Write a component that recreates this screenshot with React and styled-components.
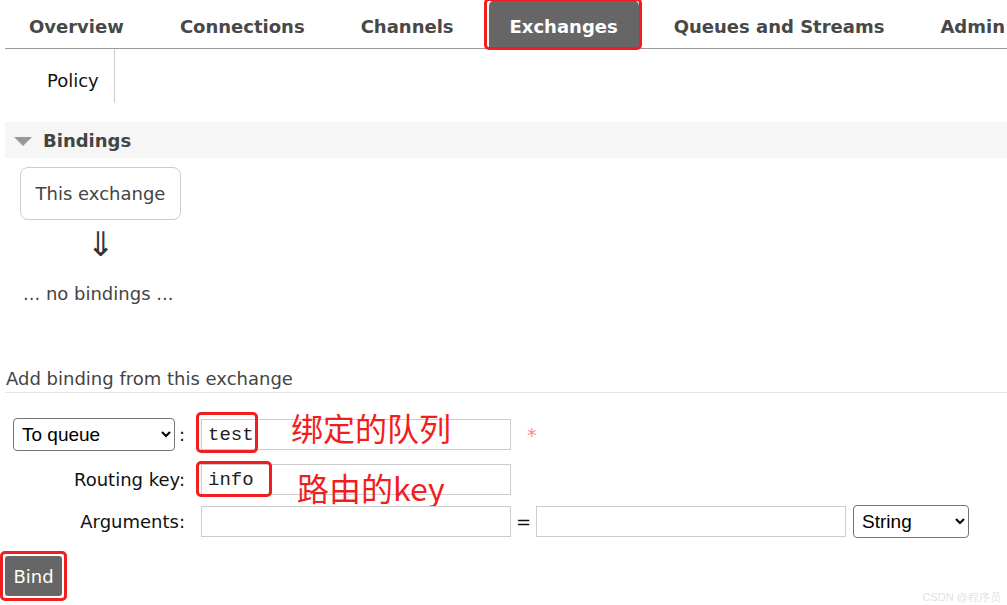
import React from "react";
import styled, { createGlobalStyle, css } from "styled-components";

const GlobalStyle = createGlobalStyle`
  html, body {
    margin: 0;
    padding: 0;
    background: #fff;
  }
  body {
    font-family: "DejaVu Sans", Verdana, sans-serif;
    color: #444;
    overflow: hidden;
  }
`;

// red marker boxes drawn over the screenshot parts
const marked = css`
  position: relative;
  ${(p) =>
    p.$marked &&
    css`
      &::after {
        content: "";
        position: absolute;
        top: ${p.$marked[0]}px;
        right: ${p.$marked[1]}px;
        bottom: ${p.$marked[2]}px;
        left: ${p.$marked[3]}px;
        border: 3px solid #f01e1e;
        border-radius: 5px;
        pointer-events: none;
      }
    `}
`;

const Page = styled.div`
  width: 1007px;
  height: 605px;
  position: relative;
  overflow: hidden;
`;

const Nav = styled.ul`
  display: flex;
  gap: 14px;
  list-style: none;
  margin: 0 0 0 5px;
  padding: 0 0 0 3px;
  height: 48px;
  border-bottom: 1px solid #999;
  white-space: nowrap;
`;

const Tab = styled.li`
  ${marked}
  display: flex;
  align-items: center;
  padding: 5px 21px 0;
  font-size: 18px;
  font-weight: bold;
  color: #484848;
  border-radius: 6px 6px 0 0;
  ${(p) =>
    p.$active &&
    css`
      background: #666;
      color: #fff;
    `}
`;

const SubNav = styled.div`
  display: flex;
  margin-left: 5px;
  height: 54px;
`;

const SubItem = styled.div`
  display: flex;
  align-items: center;
  padding: 8px 15px 0 42px;
  font-size: 18px;
  color: #111;
  border-right: 1px solid #ccc;
`;

const SectionHead = styled.div`
  display: flex;
  align-items: center;
  gap: 11px;
  margin: 19px 0 0 5px;
  height: 36px;
  padding-left: 9px;
  background: #f6f6f6;
  font-size: 18px;
  font-weight: bold;
  color: #444;
`;

const Triangle = styled.span`
  width: 0;
  height: 0;
  border-left: 9px solid transparent;
  border-right: 9px solid transparent;
  border-top: 9px solid #999;
  margin-top: 2px;
`;

const Diagram = styled.div`
  display: flex;
  flex-direction: column;
  align-items: flex-start;
  padding-left: 20px;
  margin-top: 9px;
`;

const NodeBox = styled.div`
  width: 159px;
  height: 51px;
  display: flex;
  align-items: center;
  justify-content: center;
  border: 1px solid #ccc;
  border-radius: 8px;
  font-size: 18px;
  color: #444;
`;

const Arrow = styled.div`
  width: 161px;
  text-align: center;
  font-size: 34px;
  line-height: 36px;
  margin-top: 6px;
  color: #333;
`;

const Empty = styled.p`
  margin: 21px 0 0 23px;
  font-size: 18px;
  color: #444;
`;

const FormTitle = styled.h3`
  margin: 63px 0 0 5px;
  padding: 0 0 1px 1px;
  font-size: 18px;
  font-weight: normal;
  color: #444;
  line-height: 24px;
  border-bottom: 1px solid #e4e4e4;
`;

const Form = styled.div`
  display: flex;
  flex-direction: column;
  margin-top: 25px;
`;

const Row = styled.div`
  display: flex;
  align-items: center;
  margin-top: ${(p) => p.$gap ?? 0}px;
`;

const LabelCell = styled.div`
  width: 185px;
  padding-left: 13px;
  box-sizing: border-box;
  display: flex;
  align-items: center;
  justify-content: flex-end;
  font-size: 18px;
  color: #111;
`;

const Select = styled.select`
  height: 33px;
  width: ${(p) => p.$w}px;
  font-family: "Liberation Sans", Arial, sans-serif;
  font-size: 19px;
  color: #000;
  background: #fff;
  border: 1px solid #767676;
  border-radius: 4px;
  padding: 0 4px;
`;

const Colon = styled.span`
  margin-left: 4px;
  flex: 1;
  text-align: left;
`;

const Field = styled.div`
  ${marked}
  margin-left: ${(p) => p.$ml ?? 16}px;
  display: flex;
  align-items: center;
`;

const Input = styled.input`
  width: 310px;
  height: 31px;
  box-sizing: border-box;
  border: 1px solid #ccc;
  padding: 0 6px;
  font-family: "Liberation Mono", "Courier New", monospace;
  font-size: 19px;
  color: #222;
  outline: none;
`;

const Note = styled.span`
  position: absolute;
  left: ${(p) => p.$x}px;
  top: ${(p) => p.$y}px;
  font-family: "Noto Sans CJK SC", "Liberation Sans", sans-serif;
  font-size: 32px;
  line-height: 40px;
  color: #f01e1e;
  white-space: nowrap;
  pointer-events: none;
`;

const Star = styled.span`
  margin-left: 16px;
  color: #f88;
  font-size: 19px;
`;

const Eq = styled.span`
  margin: 0 5px 0 5px;
  font-size: 18px;
  color: #111;
`;

const ButtonWrap = styled.div`
  ${marked}
  display: inline-block;
  margin: 18px 0 0 5px;
`;

const Button = styled.button`
  width: 57px;
  height: 40px;
  background: #666;
  color: #fff;
  border: none;
  border-radius: 3px;
  font-family: "DejaVu Sans", Verdana, sans-serif;
  font-size: 18px;
`;

const Watermark = styled.span`
  position: absolute;
  right: 6px;
  bottom: 0;
  font-family: "Liberation Sans", Arial, sans-serif;
  font-size: 11px;
  color: #e2e2e2;
`;

const tabs = ["Overview", "Connections", "Channels", "Exchanges", "Queues and Streams", "Admin"];

export default function App() {
  return (
    <Page>
      <GlobalStyle />
      <Nav>
        {tabs.map((t) => (
          <Tab
            key={t}
            $active={t === "Exchanges"}
            $marked={t === "Exchanges" ? [-2, -3, -2, -5] : null}
          >
            {t}
          </Tab>
        ))}
      </Nav>
      <SubNav>
        <SubItem>Policy</SubItem>
      </SubNav>

      <SectionHead>
        <Triangle />
        Bindings
      </SectionHead>
      <Diagram>
        <NodeBox>This exchange</NodeBox>
        <Arrow>⇓</Arrow>
      </Diagram>
      <Empty>... no bindings ...</Empty>

      <FormTitle>Add binding from this exchange</FormTitle>
      <Form>
        <Row>
          <LabelCell>
            <Select $w={165} defaultValue="queue">
              <option value="queue">To queue</option>
              <option value="exchange">To exchange</option>
            </Select>
            <Colon>:</Colon>
          </LabelCell>
          <Field $marked={[-7, 253, -3, -5]}>
            <Input defaultValue="test" readOnly />
            <Note $x={90} $y={-12}>绑定的队列</Note>
          </Field>
          <Star>*</Star>
        </Row>
        <Row $gap={13}>
          <LabelCell>Routing key:</LabelCell>
          <Field $marked={[-3, 239, -2, -5]}>
            <Input defaultValue="info" readOnly />
            <Note $x={96} $y={3}>路由的key</Note>
          </Field>
        </Row>
        <Row $gap={10}>
          <LabelCell>Arguments:</LabelCell>
          <Field>
            <Input defaultValue="" readOnly />
          </Field>
          <Eq>=</Eq>
          <Field $ml={0}>
            <Input defaultValue="" readOnly />
          </Field>
          <Field $ml={7}>
            <Select $w={116} defaultValue="string">
              <option value="string">String</option>
              <option value="number">Number</option>
              <option value="boolean">Boolean</option>
            </Select>
          </Field>
        </Row>
      </Form>
      <ButtonWrap $marked={[-5, -5, -5, -5]}>
        <Button>Bind</Button>
      </ButtonWrap>
      <Watermark>CSDN @程序员</Watermark>
    </Page>
  );
}
